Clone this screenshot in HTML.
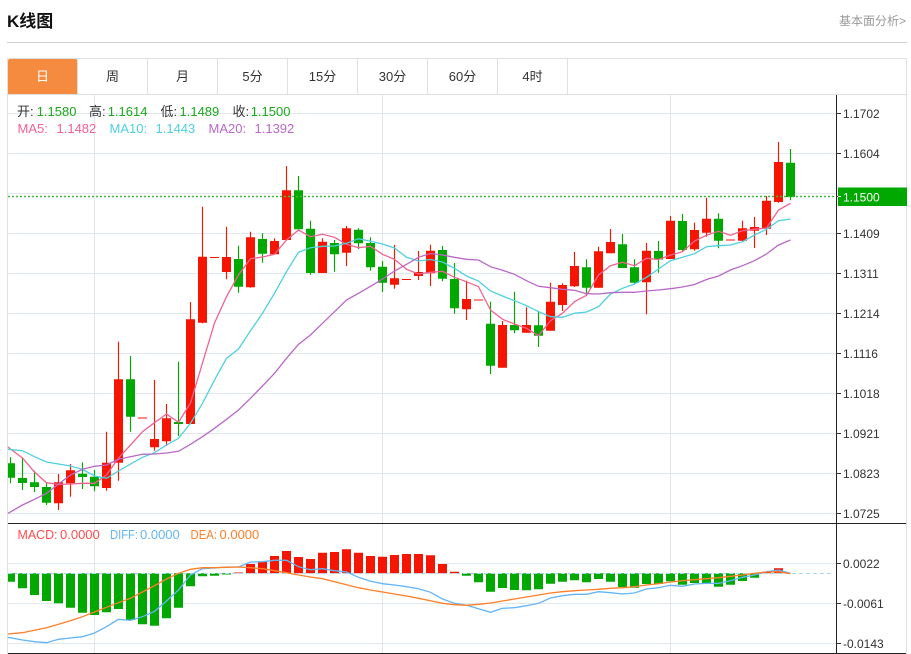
<!DOCTYPE html>
<html lang="zh">
<head>
<meta charset="utf-8">
<title>K线图</title>
<style>
html,body{margin:0;padding:0;background:#fff;width:911px;height:654px;overflow:hidden}
body{position:relative;font-family:"Liberation Sans","Noto Sans CJK SC",sans-serif;color:#333}
.title{position:absolute;left:7px;top:11px;font-size:17px;font-weight:bold;line-height:22px;color:#111}
.more{position:absolute;left:839px;top:13px;font-size:12px;line-height:16px;color:#999;white-space:nowrap}
.rule{position:absolute;left:7px;top:42px;width:900px;height:1px;background:#d2d2d2}
.tab{position:absolute;top:59px;height:35px;line-height:36px;width:69px;text-align:center;font-size:13px;color:#333;border-right:1px solid #dfdfdf}
.tab.on{background:#f58b3f;color:#fff;border-right:1px solid #dfdfdf;border-radius:2px 2px 0 0}
svg{position:absolute;left:0;top:0}
svg text{font-family:"Liberation Sans","Noto Sans CJK SC",sans-serif}
</style>
</head>
<body>
<div class="title">K线图</div>
<div class="more">基本面分析&gt;</div>
<div class="rule"></div>

<svg width="911" height="654" viewBox="0 0 911 654">
  <!-- frame -->
  <path d="M7.5 58.5H906.5V654M7.5 58.5V654M8 94.5H906" fill="none" stroke="#dfdfdf"/>
  <!-- grid -->
  <path d="M8 113.5H836M8 153.5H836M8 193.5H836M8 233.5H836M8 273.5H836M8 313.5H836M8 353.5H836M8 393.5H836M8 433.5H836M8 473.5H836M8 513.5H836M8 563.5H836M8 603.5H836M8 643.5H836M94.5 95V653M382.5 95V653M670.5 95V653" fill="none" stroke="#e0e7ed"/>

  <!-- wicks -->
  <path fill="none" stroke="#f61500" stroke-width="1.15" d="M58.5 474V510M70.5 464V496.7M106.5 431.7V490.7M118.5 341.7V480.7M154.5 380V450.7M166.5 404V446M190.5 302V424M202.5 206.7V323.3M226.5 226.7V279.3M250.5 231.7V287.7M274.5 238.3V254.3M286.5 166V240M322.5 238.3V273M346.5 226V266M394.5 245V288.7M418.5 251V280M430.5 244.7V286M466.5 280.7V320M502.5 321V367.7M526.5 307.3V332.7M550.5 282.7V330.7M562.5 283.3V311M574.5 252V287M598.5 246.7V287.7M610.5 229V253.3M646.5 243V314.3M670.5 216V259M694.5 222.7V250.7M706.5 197.7V236.7M742.5 220.7V241M754.5 217V248M766.5 196V235M778.5 142V202.7"/>
  <path fill="none" stroke="#00a800" stroke-width="1.15" d="M10.5 457.3V483.3M22.5 458V490M34.5 470.7V492M46.5 482V505M82.5 462.3V489M94.5 470V491.3M130.5 356V431.7M178.5 361.7V436M238.5 245.7V292.7M262.5 233.3V262.7M298.5 176V229.3M310.5 220.7V274.7M334.5 240V271.7M358.5 228.3V249M370.5 237.3V270.7M382.5 261V292M442.5 246V281.3M454.5 263V313.7M490.5 301.7V374M514.5 291.7V333.3M538.5 310.7V347M586.5 259.3V296M622.5 234V268M634.5 259.3V283.3M658.5 241V272.7M682.5 214V251.7M718.5 213.3V248.3M790.5 149V200.3"/>

  <!-- bodies -->
  <path fill="#f61500" d="M54 482.3h9V503.3h-9zM66 470.3h9V483.3h-9zM102 462.7h9V488h-9zM114 379.3h9V462.7h-9zM150 439h9V447.3h-9zM162 418.3h9V441.3h-9zM186 319.3h9V424h-9zM198 256.7h9V322.7h-9zM222 257h9V272h-9zM246 237.3h9V287.3h-9zM270 241h9V254.3h-9zM282 190.3h9V240h-9zM318 241.7h9V273h-9zM342 228.3h9V252.7h-9zM390 278.3h9V284.7h-9zM414 272h9V276h-9zM426 250.7h9V273.3h-9zM462 299h9V309.3h-9zM498 325h9V367.7h-9zM522 325h9V332.7h-9zM546 301.7h9V330.7h-9zM558 285h9V305h-9zM570 266h9V286.3h-9zM594 251.3h9V287.7h-9zM606 242h9V253.3h-9zM642 250.7h9V282.3h-9zM666 220.7h9V259h-9zM690 230h9V249.3h-9zM702 218.7h9V232.7h-9zM738 228.3h9V240.7h-9zM750 227h9V230.7h-9zM762 200.7h9V228.7h-9zM774 162h9V202h-9z"/>
  <path fill="#f61500" d="M210 257h9v1h-9zM402 279h9v1h-9z"/>
  <path fill="#f88" d="M138 417h9v2h-9zM474 299h9v2h-9zM726 239h9v2h-9z"/>
  <path fill="#00a800" d="M8 463.3h7V477.7h-7zM18 478h9V483h-9zM30 482.3h9V487h-9zM42 487h9V502.7h-9zM78 473.7h9V477h-9zM90 476.7h9V486.3h-9zM126 379.3h9V416.7h-9zM174 422h9V424h-9zM234 259h9V286.7h-9zM258 239h9V253.7h-9zM294 190.3h9V229.3h-9zM306 228.7h9V273h-9zM330 243h9V254.3h-9zM354 229.7h9V243.3h-9zM366 243h9V267.3h-9zM378 266.7h9V282.7h-9zM438 250h9V278.7h-9zM450 279h9V308.3h-9zM486 323.7h9V365.7h-9zM510 325h9V330.3h-9zM534 325.3h9V335.7h-9zM582 267.3h9V287.7h-9zM618 244.3h9V268h-9zM630 267.3h9V282.7h-9zM654 251h9V259.5h-9zM678 221h9V250h-9zM714 218.7h9V240.7h-9zM786 162.7h9V197h-9z"/>

  <!-- MA lines -->
  <polyline fill="none" stroke="#f06292" stroke-width="1.3" points="8,447 10.5,449 22.5,458 34.5,472 46.5,482.7 58.5,484.5 70.5,484 82.5,483.3 94.5,483.3 106.5,475 118.5,458 130.5,445 142.5,431.7 154.5,422.7 166.5,414 178.5,422.3 190.5,403 202.5,363 214.5,323 226.5,296.7 238.5,275 250.5,258.7 262.5,257 274.5,254.3 286.5,240 298.5,230 310.5,236.7 322.5,234.3 334.5,237.3 346.5,244.3 358.5,247.7 370.5,246.3 382.5,254.3 394.5,259.3 406.5,269.3 418.5,274 430.5,272.3 442.5,271.3 454.5,277.3 466.5,281.7 478.5,286.7 490.5,310 502.5,319.3 514.5,324 526.5,328.3 538.5,335.7 550.5,320.7 562.5,313.3 574.5,301.7 586.5,295.3 598.5,275 610.5,265.7 622.5,262.3 634.5,265.7 646.5,258.3 658.5,259.5 670.5,255 682.5,251.7 694.5,241 706.5,235.3 718.5,231.3 730.5,235.3 742.5,230.7 754.5,229.3 766.5,228 778.5,210 790.5,203.3"/>
  <polyline fill="none" stroke="#4dd0e1" stroke-width="1.3" points="8,449.3 22.5,450.7 34.5,456.7 46.5,462 58.5,464 70.5,466 82.5,469.3 94.5,476 106.5,478.3 118.5,471 130.5,464 142.5,457.3 154.5,452.7 166.5,445 178.5,438.3 190.5,423.3 202.5,403.3 214.5,380 226.5,358.3 238.5,349 250.5,330.7 262.5,313.3 274.5,293.3 286.5,271.7 298.5,252.3 310.5,247.7 322.5,246.3 334.5,246 346.5,243.3 358.5,238.7 370.5,241.3 382.5,244 394.5,248 406.5,257.3 418.5,261 430.5,259.5 442.5,262 454.5,268.3 466.5,276 478.5,281 490.5,291 502.5,296 514.5,300.7 526.5,305.7 538.5,311.7 550.5,316.7 562.5,317.3 574.5,313.3 586.5,312 598.5,306.7 610.5,294 622.5,288.3 634.5,284 646.5,277.3 658.5,269 670.5,260.7 682.5,257.3 694.5,253.7 706.5,246.7 718.5,245.7 730.5,245 742.5,241.7 754.5,235 766.5,229.3 778.5,220.7 790.5,219"/>
  <polyline fill="none" stroke="#ba68c8" stroke-width="1.3" points="8,513.3 22.5,505 34.5,499.3 46.5,493.3 58.5,484 70.5,475 82.5,469.3 94.5,466.3 106.5,465 118.5,459.3 130.5,456.7 142.5,454.3 154.5,454 166.5,453 178.5,451.3 190.5,444.3 202.5,436.7 214.5,428.3 226.5,419.3 238.5,410 250.5,398.3 262.5,386 274.5,373.3 286.5,358.3 298.5,344.3 310.5,335 322.5,323.3 334.5,311.7 346.5,300 358.5,293.3 370.5,286.3 382.5,279 394.5,271 406.5,264.3 418.5,257.3 430.5,253.5 442.5,255 454.5,257.3 466.5,259.3 478.5,260 490.5,266.7 502.5,270.3 514.5,274.3 526.5,280.7 538.5,286.3 550.5,287.7 562.5,289.3 574.5,290.3 586.5,293.7 598.5,294 610.5,292.7 622.5,292.3 634.5,292.3 646.5,291 658.5,290 670.5,288.7 682.5,287 694.5,284.5 706.5,279.5 718.5,276 730.5,270 742.5,265.7 754.5,260.7 766.5,254 778.5,245 790.5,240"/>

  <!-- last price line -->
  <line x1="8" y1="196.5" x2="836" y2="196.5" stroke="#3fbe3f" stroke-width="1.4" stroke-dasharray="2 2"/>

  <!-- MACD bars -->
  <path fill="#00a800" d="M8 573.3h7V581.7h-7zM18 573.3h9V588.3h-9zM30 573.3h9V595h-9zM42 573.3h9V601h-9zM54 573.3h9V603.3h-9zM66 573.3h9V607.7h-9zM78 573.3h9V612.7h-9zM90 573.3h9V615h-9zM102 573.3h9V612.3h-9zM114 573.3h9V609h-9zM126 573.3h9V620h-9zM138 573.3h9V624.3h-9zM150 573.3h9V625.7h-9zM162 573.3h9V618.3h-9zM174 573.3h9V607.7h-9zM186 573.3h9V586.3h-9zM198 573.3h9V576.3h-9zM210 573.3h9V575.7h-9zM222 573.3h9V574.5h-9z"/>
  <path fill="#00a800" d="M462 573.3h9V575.7h-9zM474 573.3h9V582.3h-9zM486 573.3h9V591.7h-9zM498 573.3h9V588h-9zM510 573.3h9V590h-9zM522 573.3h9V590.3h-9zM534 573.3h9V589.3h-9zM546 573.3h9V583.7h-9zM558 573.3h9V581.7h-9zM570 573.3h9V580.3h-9zM582 573.3h9V582.3h-9zM594 573.3h9V579h-9zM606 573.3h9V581.7h-9zM618 573.3h9V587h-9zM630 573.3h9V587.7h-9zM642 573.3h9V584h-9zM654 573.3h9V584h-9zM666 573.3h9V581.3h-9zM678 573.3h9V584.7h-9zM690 573.3h9V583h-9zM702 573.3h9V583.3h-9zM714 573.3h9V586.7h-9zM726 573.3h9V584.7h-9zM738 573.3h9V581h-9zM750 573.3h9V577.7h-9z"/>
  <path fill="#f61500" d="M234 572.5h9V573.3h-9zM246 564h9V573.3h-9zM258 562h9V573.3h-9zM270 556h9V573.3h-9zM282 551h9V573.3h-9zM294 557h9V573.3h-9zM306 559h9V573.3h-9zM318 552.7h9V573.3h-9zM330 552h9V573.3h-9zM342 549.3h9V573.3h-9zM354 552.7h9V573.3h-9zM366 556h9V573.3h-9zM378 556.7h9V573.3h-9zM390 555h9V573.3h-9zM402 554h9V573.3h-9zM414 554h9V573.3h-9zM426 555.3h9V573.3h-9zM438 564h9V573.3h-9zM450 571.7h9V573.3h-9zM762 571.7h9V573.3h-9zM774 568.3h9V573.3h-9z"/>
  <line x1="8" y1="573.5" x2="832" y2="573.5" stroke="#a8d8f0" stroke-dasharray="4 3"/>

  <!-- DIFF / DEA -->
  <polyline fill="none" stroke="#64b5f6" stroke-width="1.3" points="8,637.3 22.5,640 34.5,641.7 46.5,642.7 58.5,639.3 70.5,638 82.5,636.7 94.5,633 106.5,626.7 118.5,619.3 130.5,620.3 142.5,616.7 154.5,611.3 166.5,601 178.5,590 190.5,575 202.5,568.7 214.5,568 226.5,567 238.5,567 250.5,562 262.5,561.7 274.5,560.3 286.5,560.3 298.5,566.7 310.5,569.7 322.5,568.7 334.5,570.7 346.5,572 358.5,577.3 370.5,581.3 382.5,583.7 394.5,585 406.5,586.7 418.5,588.7 430.5,592.3 442.5,599 454.5,603.3 466.5,605.3 478.5,608.7 490.5,612.3 502.5,608.3 514.5,607.7 526.5,605.7 538.5,603.3 550.5,598 562.5,595.7 574.5,594.3 586.5,594.3 598.5,591.7 610.5,592.7 622.5,594 634.5,593 646.5,589 658.5,587.7 670.5,585.3 682.5,586.3 694.5,584 706.5,583.3 718.5,583.3 730.5,580.7 742.5,577.3 754.5,575 766.5,571.7 778.5,570 790.5,573.3"/>
  <polyline fill="none" stroke="#ff7f27" stroke-width="1.3" points="8,634 22.5,632.7 34.5,630.3 46.5,627.7 58.5,624.3 70.5,620.7 82.5,616.7 94.5,612 106.5,607.3 118.5,602.7 130.5,598.3 142.5,592 154.5,585.7 166.5,579 178.5,573.3 190.5,569.3 202.5,567.7 214.5,567.7 226.5,567.3 238.5,567 250.5,567.7 262.5,568.7 274.5,570.7 286.5,572.7 298.5,575 310.5,577 322.5,578.7 334.5,581.7 346.5,584.7 358.5,587.7 370.5,590 382.5,592 394.5,594 406.5,596 418.5,598.3 430.5,600.7 442.5,603.3 454.5,604.7 466.5,605.3 478.5,604.3 490.5,603 502.5,601 514.5,599 526.5,597 538.5,595 550.5,593 562.5,591.7 574.5,590.7 586.5,590 598.5,589.3 610.5,588.3 622.5,587.7 634.5,586.7 646.5,585 658.5,583.7 670.5,582 682.5,580.7 694.5,579.7 706.5,578.7 718.5,577.7 730.5,576.3 742.5,575 754.5,573.3 766.5,572 778.5,571.7 790.5,573.7"/>

  <!-- axes -->
  <path d="M8 523.5H906M8 653.5H906M836.5 95V654" fill="none" stroke="#222"/>
  <path d="M836 113.5h5M836 153.5h5M836 233.5h5M836 273.5h5M836 313.5h5M836 353.5h5M836 393.5h5M836 433.5h5M836 473.5h5M836 513.5h5M836 563.5h5M836 603.5h5M836 643.5h5" fill="none" stroke="#333"/>
  <rect x="838" y="187.5" width="69" height="18.5" fill="#00a800"/>
  <path d="M836 196.5h2" stroke="#333"/>
  <path d="M838 196.5h3" stroke="#fff"/>

  <g font-size="12" fill="#333">
    <text x="843" y="118">1.1702</text>
    <text x="843" y="158">1.1604</text>
    <text x="843" y="201.5" fill="#fff">1.1500</text>
    <text x="843" y="238">1.1409</text>
    <text x="843" y="278">1.1311</text>
    <text x="843" y="318">1.1214</text>
    <text x="843" y="358">1.1116</text>
    <text x="843" y="398">1.1018</text>
    <text x="843" y="438">1.0921</text>
    <text x="843" y="478">1.0823</text>
    <text x="843" y="518">1.0725</text>
    <text x="843" y="568">0.0022</text>
    <text x="843" y="608">-0.0061</text>
    <text x="843" y="648">-0.0143</text>
  </g>

  <g font-size="13">
    <text x="17" y="116" fill="#333">开:</text><text x="36.7" y="116" fill="#1aa81a">1.1580</text>
    <text x="89" y="116" fill="#333">高:</text><text x="107.7" y="116" fill="#1aa81a">1.1614</text>
    <text x="160.5" y="116" fill="#333">低:</text><text x="179.5" y="116" fill="#1aa81a">1.1489</text>
    <text x="232.5" y="116" fill="#333">收:</text><text x="250.7" y="116" fill="#1aa81a">1.1500</text>
    <text x="17.5" y="133" fill="#f06292">MA5:</text><text x="56.5" y="133" fill="#f06292">1.1482</text>
    <text x="109.5" y="133" fill="#4dd0e1">MA10:</text><text x="155.5" y="133" fill="#4dd0e1">1.1443</text>
    <text x="208.5" y="133" fill="#ba68c8">MA20:</text><text x="254.5" y="133" fill="#ba68c8">1.1392</text>
    <text x="17.5" y="539" fill="#ff4d4d" textLength="40" lengthAdjust="spacingAndGlyphs">MACD:</text><text x="60" y="539" fill="#ff4d4d">0.0000</text>
    <text x="110" y="539" fill="#64b5f6" textLength="28" lengthAdjust="spacingAndGlyphs">DIFF:</text><text x="140" y="539" fill="#64b5f6">0.0000</text>
    <text x="190.5" y="539" fill="#ff7f27" textLength="26.5" lengthAdjust="spacingAndGlyphs">DEA:</text><text x="219.5" y="539" fill="#ff7f27">0.0000</text>
  </g>
</svg>

<div class="tab on" style="left:8px">日</div>
<div class="tab" style="left:78px">周</div>
<div class="tab" style="left:148px">月</div>
<div class="tab" style="left:218px">5分</div>
<div class="tab" style="left:288px">15分</div>
<div class="tab" style="left:358px">30分</div>
<div class="tab" style="left:428px">60分</div>
<div class="tab" style="left:498px">4时</div>
</body>
</html>
